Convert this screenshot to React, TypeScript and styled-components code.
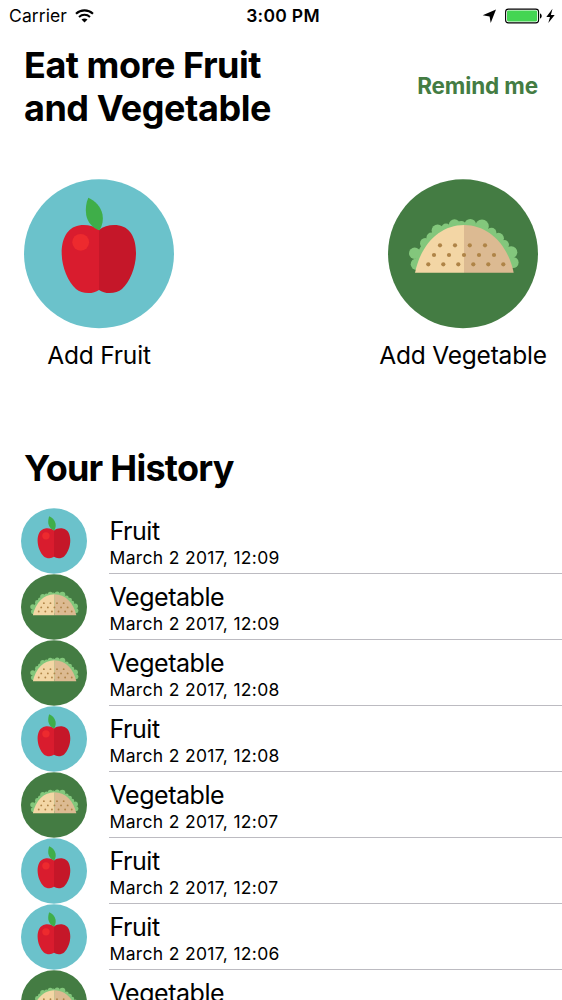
import React from "react";
import styled, { createGlobalStyle } from "styled-components";

type Kind = "Fruit" | "Vegetable";

const Global = createGlobalStyle`
  body {
    margin: 0;
    background: #fff;
    color: #000;
    font-family: Inter, "Liberation Sans", sans-serif;
    font-feature-settings: "calt" 0;
    overflow: hidden;
  }
`;

const Screen = styled.main`
  display: flex;
  flex-direction: column;
  width: 562px;
  height: 1000px;
  overflow: hidden;
  background: #fff;
`;

const StatusBar = styled.header`
  display: grid;
  grid-template-columns: 1fr auto 1fr;
  align-items: center;
  flex: none;
  height: 32px;
  padding: 0 5px 0 9px;
  font-size: 17.5px;
  line-height: 32px;
`;

const StatusGroup = styled.div<{ $end?: boolean }>`
  display: flex;
  align-items: center;
  justify-content: ${(p) => (p.$end ? "flex-end" : "flex-start")};
  gap: 8px;
  letter-spacing: 0.1px;
`;

const Clock = styled.time`
  font-weight: 600;
  letter-spacing: 0.3px;
`;

const TitleRow = styled.section`
  display: flex;
  align-items: center;
  justify-content: space-between;
  flex: none;
  height: 86px;
  padding: 12px 24px 0;
`;

const Title = styled.h1<{ $spacing?: number }>`
  margin: 0;
  font-size: 36px;
  line-height: 43px;
  font-weight: 700;
  letter-spacing: ${(p) => p.$spacing ?? -0.47}px;
  white-space: nowrap;
`;

const Remind = styled.button`
  padding: 0 0 2px;
  border: 0;
  background: none;
  color: #447c43;
  font: 700 22.5px/28px Inter, "Liberation Sans", sans-serif;
  letter-spacing: -0.13px;
  white-space: nowrap;
`;

const Actions = styled.section`
  display: flex;
  justify-content: space-between;
  flex: none;
  height: 268px;
  padding: 49px 24px 0;
  box-sizing: border-box;
`;

const Action = styled.button`
  display: flex;
  flex-direction: column;
  align-items: center;
  width: 150px;
  padding: 0;
  border: 0;
  background: none;
  color: #000;
  font: 400 24.5px/30px Inter, "Liberation Sans", sans-serif;
`;

const ActionLabel = styled.span`
  margin-top: 11px;
  letter-spacing: -0.2px;
  white-space: nowrap;
`;

const HistoryTitle = styled(Title).attrs({ as: "h2" })`
  flex: none;
  height: 61px;
  padding: 49px 24px 0;
`;

const List = styled.ul`
  margin: 0;
  padding: 0 0 0 21px;
  list-style: none;
`;

const Row = styled.li`
  display: flex;
  gap: 22px;
  height: 66px;
`;

const RowText = styled.div`
  flex: 1;
  height: 66px;
  box-sizing: border-box;
  padding: 8px 0 0 0.5px;
  border-bottom: 1px solid #bcbbc1;
`;

const RowName = styled.div`
  font-size: 25px;
  line-height: 30px;
  letter-spacing: -0.45px;
`;

const RowDate = styled.div`
  font-size: 17.5px;
  line-height: 24px;
  letter-spacing: 0.33px;
`;

const Disc = styled.svg`
  display: block;
  flex: none;
`;

function AppleArt() {
  return (
    <>
      <ellipse cx="75" cy="74.800" rx="75" ry="74.500" fill="#6bc2cb" />
      <path d="M75 51C70 46.800 62 45.300 55 46.500C43 48.500 37.700 60 37.700 74C37.700 88 44 103 52 110C57.500 115 69 115.500 75 111Z" fill="#d91c2e" />
      <path d="M75 51C80 46.800 88 45.300 95 46.500C107 48.500 112 60 112 74C112 88 106 103 98 110C92.500 115 81 115.500 75 111Z" fill="#c51729" />
      <path d="M64.300 18.700C71 21.500 77 27.500 78.500 35.500C79.500 41 78.500 46 75.700 51.300C69 49.500 63.500 43.500 62.200 36C61.300 30 62 24 64.300 18.700Z" fill="#3fae49" />
      <circle cx="56.700" cy="63.300" r="8.400" fill="#ed2a2e" />
    </>
  );
}

const leaves = [
  [26.7, 74.3, 5.7], [28.5, 85.2, 5.8], [37.2, 64.3, 5.2], [43.5, 58.5, 5], [49.6, 51.5, 6],
  [58, 49.3, 4.8], [66.5, 46, 5.7], [73.3, 47, 5], [82.3, 45.7, 5.8], [94, 47.4, 6.8],
  [103.5, 53.7, 4.9], [110.5, 59.2, 5.4], [116.3, 65.700, 4.7], [123.3, 73.2, 6], [125, 83.500, 5.6],
];

const seeds = [
  [52, 66.3], [67, 66.3], [81.8, 66.3], [97, 66.3],
  [46, 76], [61, 76], [76, 76], [91, 76], [106, 76],
  [40.3, 85.3], [55.3, 85.3], [70.3, 85.3], [85.3, 85.3], [100.3, 85.3], [115.3, 85.3],
];

function TacoArt() {
  return (
    <>
      <ellipse cx="75" cy="74.800" rx="75" ry="74.500" fill="#447c43" />
      <path d="M26 90C28 60 52 44 76 44S123 60 127 88Z" fill="#83c77c" />
      {leaves.map(([x, y, r]) => (
        <circle key={x} cx={x} cy={y} r={r} fill="#83c77c" />
      ))}
      <path d="M27 93.700C33 65 52 46 76 46V93.700Z" fill="#f3d6a5" />
      <path d="M125.700 93.700C119.700 65 100 46 76 46V93.700Z" fill="#dcba92" />
      {seeds.map(([x, y]) => (
        <circle key={`${x}-${y}`} cx={x} cy={y} r="2.100" fill="#af8447" />
      ))}
    </>
  );
}

function FoodDisc({ kind, size }: { kind: Kind; size: number }) {
  return (
    <Disc width={size} height={size} viewBox="0 0 150 150" aria-hidden>
      {kind === "Fruit" ? <AppleArt /> : <TacoArt />}
    </Disc>
  );
}

function WifiIcon() {
  return (
    <svg width="19" height="14" viewBox="0 0 19 14" aria-hidden>
      <path d="M1 4.700C5.800 0.200 13.200 0.200 18 4.700" fill="none" stroke="#000" strokeWidth="2.100" />
      <path d="M4 7.900C7.200 5 11.800 5 15 7.900" fill="none" stroke="#000" strokeWidth="2" />
      <path d="M6.500 10.500C8.200 9 10.800 9 12.500 10.500L9.500 13.500Z" />
    </svg>
  );
}

function PowerIcons() {
  return (
    <svg width="75" height="16" viewBox="0 0 75 16" aria-hidden>
      <path d="M14 1.500L8.700 15L7.600 8.500L0.700 7.300Z" />
      <rect x="23.600" y="1.100" width="33" height="13.800" rx="2.800" fill="#fff" stroke="#000" strokeWidth="1.100" />
      <rect x="25" y="2.500" width="30.200" height="11" rx="1.400" fill="#44d553" />
      <path d="M58 5.500C60.300 5.900 60.300 10.100 58 10.500Z" />
      <path d="M70.500 0.800L64.300 9H68L66.300 15L72.700 7.100H68.900Z" />
    </svg>
  );
}

const history: { kind: Kind; date: string }[] = [
  { kind: "Fruit", date: "March 2 2017, 12:09" },
  { kind: "Vegetable", date: "March 2 2017, 12:09" },
  { kind: "Vegetable", date: "March 2 2017, 12:08" },
  { kind: "Fruit", date: "March 2 2017, 12:08" },
  { kind: "Vegetable", date: "March 2 2017, 12:07" },
  { kind: "Fruit", date: "March 2 2017, 12:07" },
  { kind: "Fruit", date: "March 2 2017, 12:06" },
  { kind: "Vegetable", date: "March 2 2017, 12:06" },
];

export default function App() {
  return (
    <Screen>
      <Global />
      <StatusBar>
        <StatusGroup>
          Carrier <WifiIcon />
        </StatusGroup>
        <Clock>3:00 PM</Clock>
        <StatusGroup $end>
          <PowerIcons />
        </StatusGroup>
      </StatusBar>
      <TitleRow>
        <Title>
          Eat more Fruit
          <br />
          and Vegetable
        </Title>
        <Remind>Remind me</Remind>
      </TitleRow>
      <Actions>
        <Action>
          <FoodDisc kind="Fruit" size={150} />
          <ActionLabel>Add Fruit</ActionLabel>
        </Action>
        <Action>
          <FoodDisc kind="Vegetable" size={150} />
          <ActionLabel>Add Vegetable</ActionLabel>
        </Action>
      </Actions>
      <HistoryTitle $spacing={-0.75}>Your History</HistoryTitle>
      <List>
        {history.map((item, i) => (
          <Row key={i}>
            <FoodDisc kind={item.kind} size={66} />
            <RowText>
              <RowName>{item.kind}</RowName>
              <RowDate>{item.date}</RowDate>
            </RowText>
          </Row>
        ))}
      </List>
    </Screen>
  );
}
